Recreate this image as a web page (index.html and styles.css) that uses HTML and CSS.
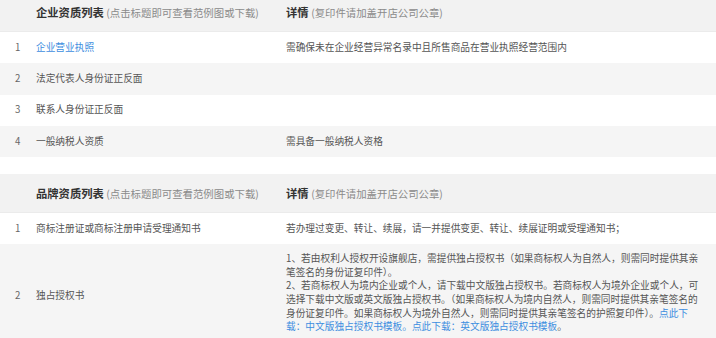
FILE: index.html
```html
<!DOCTYPE html>
<html lang="zh-CN">
<head>
<meta charset="utf-8">
<title>资质列表</title>
<link rel="stylesheet" href="styles.css">
</head>
<body>
<div class="page">
  <table class="qual-table">
    <colgroup><col class="c-num"><col class="c-name"><col class="c-detail"></colgroup>
    <thead>
      <tr class="head">
        <th></th>
        <th><b>企业资质列表</b> <span class="note">(点击标题即可查看范例图或下载)</span></th>
        <th><b>详情</b> <span class="note">(复印件请加盖开店公司公章)</span></th>
      </tr>
    </thead>
    <tbody>
      <tr><td class="num">1</td><td><a href="#" class="link">企业营业执照</a></td><td>需确保未在企业经营异常名录中且所售商品在营业执照经营范围内</td></tr>
      <tr class="alt"><td class="num">2</td><td>法定代表人身份证正反面</td><td></td></tr>
      <tr><td class="num">3</td><td>联系人身份证正反面</td><td></td></tr>
      <tr class="alt"><td class="num">4</td><td>一般纳税人资质</td><td>需具备一般纳税人资格</td></tr>
    </tbody>
  </table>

  <table class="qual-table">
    <colgroup><col class="c-num"><col class="c-name"><col class="c-detail"></colgroup>
    <thead>
      <tr class="head">
        <th></th>
        <th><b>品牌资质列表</b> <span class="note">(点击标题即可查看范例图或下载)</span></th>
        <th><b>详情</b> <span class="note">(复印件请加盖开店公司公章)</span></th>
      </tr>
    </thead>
    <tbody>
      <tr><td class="num">1</td><td>商标注册证或商标注册申请受理通知书</td><td>若办理过变更、转让、续展，请一并提供变更、转让、续展证明或受理通知书；</td></tr>
      <tr class="alt tall">
        <td class="num">2</td>
        <td>独占授权书</td>
        <td class="long">1、若由权利人授权开设旗舰店，需提供独占授权书（如果商标权人为自然人，则需同时提供其亲<br>笔签名的身份证复印件）。<br>2、若商标权人为境内企业或个人，请下载中文版独占授权书。若商标权人为境外企业或个人，可<br>选择下载中文版或英文版独占授权书。（如果商标权人为境内自然人，则需同时提供其亲笔签名的<br>身份证复印件。如果商标权人为境外自然人，则需同时提供其亲笔签名的护照复印件）。<a href="#" class="link">点此下<br>载：中文版独占授权书模板。</a><a href="#" class="link">点此下载：英文版独占授权书模板</a>。</td>
      </tr>
    </tbody>
  </table>
</div>
</body>
</html>
```

FILE: styles.css
```css
html, body {
  margin: 0;
  padding: 0;
  background: #ffffff;
}

body {
  font-family: "Noto Sans CJK SC", "Noto Sans", sans-serif;
  color: #555555;
  overflow: hidden;
}

.page {
  display: flex;
  flex-direction: column;
  gap: 17px;
  margin-top: -7px;
}

.qual-table {
  width: 100%;
  border-collapse: collapse;
  table-layout: fixed;
}

.c-num { width: 36px; }
.c-name { width: 250px; }

.qual-table th,
.qual-table td {
  padding: 0;
  text-align: left;
  vertical-align: middle;
  font-weight: normal;
}

.head {
  background: #f2f2f2;
  border-bottom: 1px solid #ebebeb;
}

.head th {
  height: 38px;
  font-size: 11.3px;
  line-height: 14px;
  color: #333333;
  white-space: nowrap;
}

.head b {
  font-weight: bold;
  color: #333333;
}

.note {
  font-size: 10.4px;
  color: #8a8a8a;
}

.qual-table td {
  height: 31.25px;
  font-size: 9.7px;
  line-height: 13.6px;
  color: #555555;
  white-space: nowrap;
}

.qual-table td.num {
  padding-left: 15px;
  color: #666666;
}

.alt {
  background: #f5f5f5;
}

.link {
  color: #3d8ee0;
  text-decoration: none;
}

.qual-table td.long {
  padding: 8px 0 14px;
}
```
